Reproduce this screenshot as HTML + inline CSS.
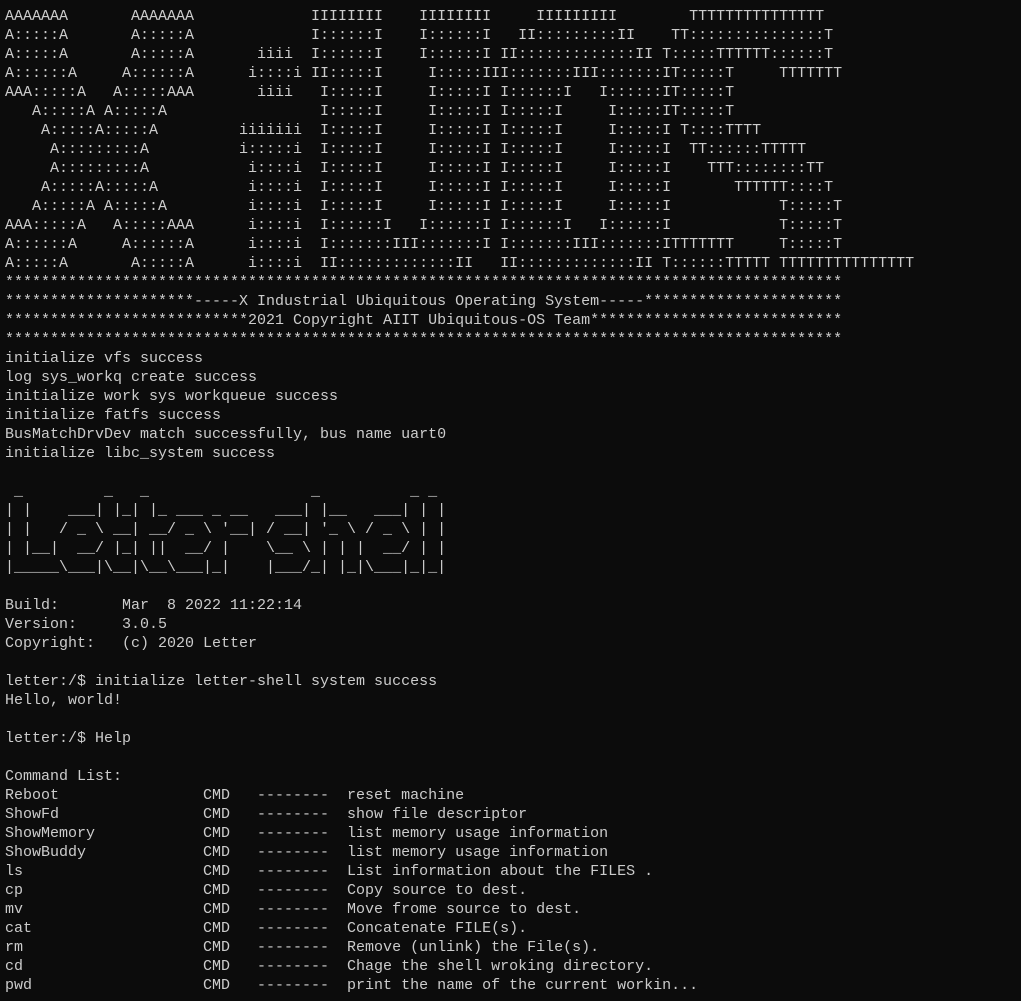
<!DOCTYPE html>
<html><head><meta charset="utf-8"><style>
html,body{margin:0;padding:0;background:#0c0c0c;width:1021px;height:1001px;overflow:hidden}
pre{margin:0;position:absolute;left:5px;top:7px;font-family:"Liberation Mono","DejaVu Sans Mono",monospace;font-size:15px;line-height:19px;color:#cccccc;white-space:pre}
</style></head><body><pre>AAAAAAA       AAAAAAA             IIIIIIII    IIIIIIII     IIIIIIIII        TTTTTTTTTTTTTTT
A:::::A       A:::::A             I::::::I    I::::::I   II:::::::::II    TT:::::::::::::::T
A:::::A       A:::::A       iiii  I::::::I    I::::::I II:::::::::::::II T:::::TTTTTT::::::T
A::::::A     A::::::A      i::::i II:::::I     I:::::III:::::::III:::::::IT:::::T     TTTTTTT
AAA:::::A   A:::::AAA       iiii   I:::::I     I:::::I I::::::I   I::::::IT:::::T
   A:::::A A:::::A                 I:::::I     I:::::I I:::::I     I:::::IT:::::T
    A:::::A:::::A         iiiiiii  I:::::I     I:::::I I:::::I     I:::::I T::::TTTT
     A:::::::::A          i:::::i  I:::::I     I:::::I I:::::I     I:::::I  TT::::::TTTTT
     A:::::::::A           i::::i  I:::::I     I:::::I I:::::I     I:::::I    TTT::::::::TT
    A:::::A:::::A          i::::i  I:::::I     I:::::I I:::::I     I:::::I       TTTTTT::::T
   A:::::A A:::::A         i::::i  I:::::I     I:::::I I:::::I     I:::::I            T:::::T
AAA:::::A   A:::::AAA      i::::i  I::::::I   I::::::I I::::::I   I::::::I            T:::::T
A::::::A     A::::::A      i::::i  I:::::::III:::::::I I:::::::III:::::::ITTTTTTT     T:::::T
A:::::A       A:::::A      i::::i  II:::::::::::::II   II:::::::::::::II T::::::TTTTT TTTTTTTTTTTTTTT
*********************************************************************************************
*********************-----X Industrial Ubiquitous Operating System-----**********************
***************************2021 Copyright AIIT Ubiquitous-OS Team****************************
*********************************************************************************************
initialize vfs success
log sys_workq create success
initialize work sys workqueue success
initialize fatfs success
BusMatchDrvDev match successfully, bus name uart0
initialize libc_system success

 _         _   _                  _          _ _
| |    ___| |_| |_ ___ _ __   ___| |__   ___| | |
| |   / _ \ __| __/ _ \ '__| / __| '_ \ / _ \ | |
| |__|  __/ |_| ||  __/ |    \__ \ | | |  __/ | |
|_____\___|\__|\__\___|_|    |___/_| |_|\___|_|_|

Build:       Mar  8 2022 11:22:14
Version:     3.0.5
Copyright:   (c) 2020 Letter

letter:/$ initialize letter-shell system success
Hello, world!

letter:/$ Help

Command List:
Reboot                CMD   --------  reset machine
ShowFd                CMD   --------  show file descriptor
ShowMemory            CMD   --------  list memory usage information
ShowBuddy             CMD   --------  list memory usage information
ls                    CMD   --------  List information about the FILES .
cp                    CMD   --------  Copy source to dest.
mv                    CMD   --------  Move frome source to dest.
cat                   CMD   --------  Concatenate FILE(s).
rm                    CMD   --------  Remove (unlink) the File(s).
cd                    CMD   --------  Chage the shell wroking directory.
pwd                   CMD   --------  print the name of the current workin...</pre></body></html>
